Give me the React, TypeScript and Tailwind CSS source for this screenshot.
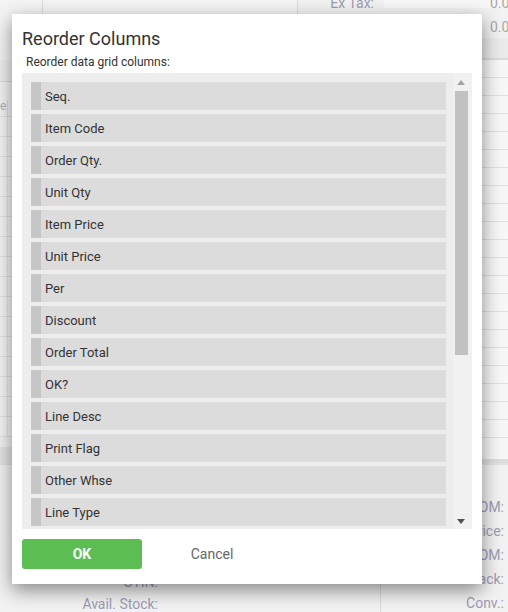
const columns = [
  'Seq.',
  'Item Code',
  'Order Qty.',
  'Unit Qty',
  'Item Price',
  'Unit Price',
  'Per',
  'Discount',
  'Order Total',
  'OK?',
  'Line Desc',
  'Print Flag',
  'Other Whse',
  'Line Type',
]

const leftRows = Array.from({ length: 16 })
const rightRows = Array.from({ length: 21 })

function BackgroundPage() {
  return (
    <div className="flex h-full w-full flex-col bg-[#f2f2f2] text-[14px] text-[#9c9cb4]">
      {/* top strip */}
      <div className="flex h-[60px] shrink-0">
        <div className="w-[43px] shrink-0 border-r border-[#dedede] bg-[#f4f4f4]" />
        <div className="w-[255px] shrink-0 border-r border-[#dedede] bg-[#f4f4f4]" />
        <div className="flex min-w-0 flex-1 flex-col overflow-hidden">
          <div className="flex h-[16px] items-start">
            <span className="w-[86px] shrink-0 pr-[10px] text-right leading-[10px] -mt-[2px]">Ex Tax:</span>
            <span className="flex-1 whitespace-nowrap bg-[#f7f7f7] pl-[106px] leading-[10px] -mt-[2px] text-[#a8a8a8]">
              0.00
            </span>
          </div>
          <div className="flex h-[22px] items-center">
            <span className="w-[86px] shrink-0" />
            <span className="flex-1 whitespace-nowrap pl-[106px] leading-none text-[#a8a8a8]">0.00</span>
          </div>
          <div className="h-[22px] border-b-2 border-[#dcdcdc] bg-[#ebebeb]" />
        </div>
      </div>

      {/* grids */}
      <div className="flex h-[403px] shrink-0">
        <div className="flex w-[298px] shrink-0 flex-col">
          <div className="h-[22px] border-b border-[#dadada] bg-[#efefef]" />
          <div className="flex h-[35px] items-end border-b border-[#e0e0e0] bg-[#f4f4f4]">
            <span className="w-[8px] overflow-hidden border-r border-[#dedede] pb-[4px] text-[12px] leading-none text-[#b0b0b0]">
              e
            </span>
          </div>
          {leftRows.map((_, i) => (
            <div key={i} className="flex h-[20px] shrink-0 border-b border-[#e2e2e2] bg-[#f5f5f5]">
              <div className="w-[8px] border-r border-[#e4e4e4]" />
            </div>
          ))}
          <div className="mt-auto h-[16px] bg-[#e4e4e4]" />
        </div>
        <div className="flex flex-1 flex-col border-l border-[#dedede] bg-[#f7f7f7]">
          {rightRows.map((_, i) => (
            <div key={i} className="h-[18px] shrink-0 border-b border-[#e2e2e2]" />
          ))}
          <div className="mt-auto h-[4px] bg-[#dedede]" />
        </div>
      </div>

      {/* bottom details */}
      <div className="flex flex-1 border-t-2 border-[#e2e2e2]">
        <div className="flex w-[381px] shrink-0 flex-col border-r border-[#dcdcdc] pt-[106px]">
          <div className="h-[22px] w-[158px] text-right leading-[22px]">GTIN:</div>
          <div className="h-[22px] w-[158px] text-right leading-[22px]">Avail. Stock:</div>
        </div>
        <div className="flex flex-1 flex-col pt-[31px]">
          {['Sell UOM:', 'Unit Price:', 'Buy UOM:', 'Pack:', 'Conv.:'].map((l, i) => (
            <div key={i} className="h-[24px] whitespace-nowrap pr-[4px] text-right leading-[22px]">
              {l}
            </div>
          ))}
        </div>
      </div>
    </div>
  )
}

function ReorderDialog() {
  return (
    <div className="absolute left-[12px] top-[14px] flex h-[570px] w-[470px] flex-col bg-white px-[10px] shadow-[0_6px_18px_rgba(0,0,0,0.45)]">
      <h2 className="pt-[14px] text-[18px] leading-[22px] text-[#333]">Reorder Columns</h2>
      <p className="mt-[5px] pl-[4px] text-[12px] leading-[14px] text-[#333]">Reorder data grid columns:</p>
      <div className="mt-[4px] flex h-[456px] bg-[#ededed]">
        <div className="flex flex-1 flex-col gap-[4px] overflow-hidden pl-[9px] pr-[7px] pt-[9px]">
          {columns.map((c) => (
            <div key={c} className="flex h-[28px] shrink-0 items-center bg-[#dcdcdc]">
              <div className="h-full w-[10px] bg-[#c6c6c6]" />
              <span className="pl-[4px] pt-[1px] text-[13px] text-[#333]">{c}</span>
            </div>
          ))}
        </div>
        <div className="flex w-[19px] shrink-0 flex-col items-center bg-[#f1f1f1] pr-[3px] pt-[7px] pb-[5px]">
          <svg width="8" height="5" viewBox="0 0 8 5" className="mb-[6px] shrink-0">
            <path d="M0 5L4 0L8 5Z" fill="#a3a3a3" />
          </svg>
          <div className="h-[264px] w-[13px] bg-[#c1c1c1]" />
          <svg width="8" height="5" viewBox="0 0 8 5" className="mt-auto shrink-0">
            <path d="M0 0L8 0L4 5Z" fill="#505050" />
          </svg>
        </div>
      </div>
      <div className="mt-[10px] flex gap-[10px]">
        <button className="h-[30px] w-[120px] rounded-[3px] bg-[#5cbd53] text-[14px] font-bold text-white">
          OK
        </button>
        <button className="h-[30px] w-[120px] text-[14px] text-[#666]">Cancel</button>
      </div>
    </div>
  )
}

export default function App() {
  return (
    <div
      className="relative h-[612px] w-[508px] overflow-hidden"
      style={{ fontFamily: 'Roboto, "Liberation Sans", sans-serif' }}
    >
      <BackgroundPage />
      <ReorderDialog />
    </div>
  )
}
